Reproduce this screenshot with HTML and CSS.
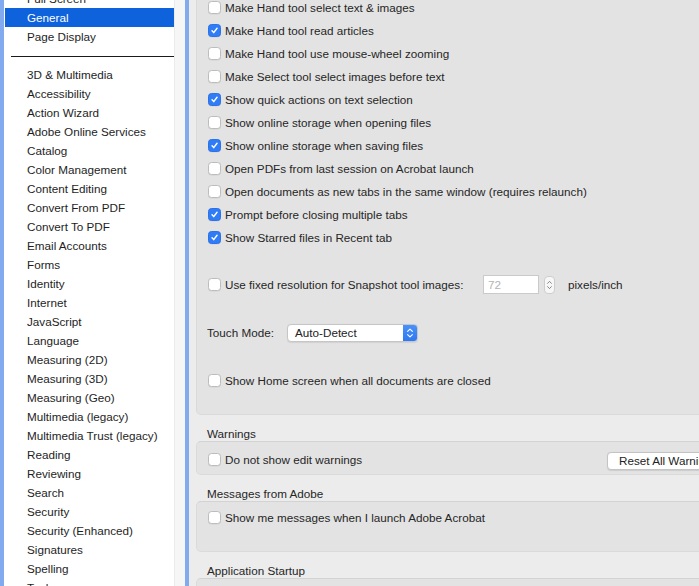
FILE: index.html
```html
<!DOCTYPE html>
<html>
<head>
<meta charset="utf-8">
<link rel="stylesheet" href="styles.css">
</head>
<body>
<div class="window">
  <div class="sidebar">
    <ul class="list">
      <li class="item">Full Screen</li>
      <li class="item selected">General</li>
      <li class="item">Page Display</li>
      <li class="sep"></li>
      <li class="item">3D &amp; Multimedia</li>
      <li class="item">Accessibility</li>
      <li class="item">Action Wizard</li>
      <li class="item">Adobe Online Services</li>
      <li class="item">Catalog</li>
      <li class="item">Color Management</li>
      <li class="item">Content Editing</li>
      <li class="item">Convert From PDF</li>
      <li class="item">Convert To PDF</li>
      <li class="item">Email Accounts</li>
      <li class="item">Forms</li>
      <li class="item">Identity</li>
      <li class="item">Internet</li>
      <li class="item">JavaScript</li>
      <li class="item">Language</li>
      <li class="item">Measuring (2D)</li>
      <li class="item">Measuring (3D)</li>
      <li class="item">Measuring (Geo)</li>
      <li class="item">Multimedia (legacy)</li>
      <li class="item">Multimedia Trust (legacy)</li>
      <li class="item">Reading</li>
      <li class="item">Reviewing</li>
      <li class="item">Search</li>
      <li class="item">Security</li>
      <li class="item">Security (Enhanced)</li>
      <li class="item">Signatures</li>
      <li class="item">Spelling</li>
      <li class="item">Tools</li>
    </ul>
    <div class="track"></div>
  </div>

  <div class="main">
    <section class="box box-first">
      <div class="row"><span class="cb"></span><span>Make Hand tool select text &amp; images</span></div>
      <div class="row"><span class="cb on"><svg viewBox="0 0 13 13"><path d="M3.6 6.9 L5.6 9 L9.5 3.9"/></svg></span><span>Make Hand tool read articles</span></div>
      <div class="row"><span class="cb"></span><span>Make Hand tool use mouse-wheel zooming</span></div>
      <div class="row"><span class="cb"></span><span>Make Select tool select images before text</span></div>
      <div class="row"><span class="cb on"><svg viewBox="0 0 13 13"><path d="M3.6 6.9 L5.6 9 L9.5 3.9"/></svg></span><span>Show quick actions on text selection</span></div>
      <div class="row"><span class="cb"></span><span>Show online storage when opening files</span></div>
      <div class="row"><span class="cb on"><svg viewBox="0 0 13 13"><path d="M3.6 6.9 L5.6 9 L9.5 3.9"/></svg></span><span>Show online storage when saving files</span></div>
      <div class="row"><span class="cb"></span><span>Open PDFs from last session on Acrobat launch</span></div>
      <div class="row"><span class="cb"></span><span>Open documents as new tabs in the same window (requires relaunch)</span></div>
      <div class="row"><span class="cb on"><svg viewBox="0 0 13 13"><path d="M3.6 6.9 L5.6 9 L9.5 3.9"/></svg></span><span>Prompt before closing multiple tabs</span></div>
      <div class="row"><span class="cb on"><svg viewBox="0 0 13 13"><path d="M3.6 6.9 L5.6 9 L9.5 3.9"/></svg></span><span>Show Starred files in Recent tab</span></div>

      <div class="row row-snap">
        <span class="cb"></span><span class="snap-label">Use fixed resolution for Snapshot tool images:</span>
        <span class="field">72</span>
        <span class="stepper"><svg viewBox="0 0 11 18"><path d="M3.2 7 L5.5 4.6 L7.8 7"/><path d="M3.2 11 L5.5 13.4 L7.8 11"/></svg></span>
        <span class="unit">pixels/inch</span>
      </div>

      <div class="row row-touch">
        <span class="touch-label">Touch Mode:</span>
        <span class="select"><span class="select-text">Auto-Detect</span><span class="select-arrows"><svg viewBox="0 0 14 18"><path d="M4.3 7.3 L7 4.7 L9.7 7.3"/><path d="M4.3 10.7 L7 13.3 L9.7 10.7"/></svg></span></span>
      </div>

      <div class="row row-home"><span class="cb"></span><span>Show Home screen when all documents are closed</span></div>
    </section>

    <div class="heading">Warnings</div>
    <section class="box box-warn">
      <div class="row"><span class="cb"></span><span class="warn-label">Do not show edit warnings</span><span class="btn">Reset All Warnings</span></div>
    </section>

    <div class="heading">Messages from Adobe</div>
    <section class="box box-msg">
      <div class="row"><span class="cb"></span><span>Show me messages when I launch Adobe Acrobat</span></div>
    </section>

    <div class="heading">Application Startup</div>
    <section class="box box-start"></section>
  </div>
</div>
</body>
</html>
```

FILE: styles.css
```css
html, body {
  margin: 0;
  padding: 0;
}

body {
  width: 699px;
  height: 586px;
  overflow: hidden;
  background: #ececec;
  font-family: "Liberation Sans", Arial, sans-serif;
  font-size: 11.7px;
  color: #262626;
}

.window {
  display: flex;
  height: 586px;
  overflow: hidden;
}

/* ---------- sidebar ---------- */
.sidebar {
  flex: none;
  display: flex;
  width: 181px;
  height: 586px;
  border-left: 4px solid #82aaef;
  border-right: 4px solid #82aaef;
  background: #ffffff;
  overflow: hidden;
}

.list {
  list-style: none;
  margin: -11px 0 0 0;
  padding: 0;
  width: 170px;
  flex: none;
}

.item {
  height: 19px;
  line-height: 19px;
  padding-left: 23px;
  white-space: nowrap;
  color: #1e1e1e;
}

.item.selected {
  margin-left: 1px;
  padding-left: 22px;
  background: #0e63dc;
  color: #ffffff;
}

.sep {
  height: 10px;
  margin: 0 0 8px 7px;
  border-bottom: 1px solid #1a1a1a;
}

.track {
  flex: none;
  width: 10px;
  background: #f6f6f6;
  border-left: 1px solid #ebebeb;
}

/* ---------- main ---------- */
.main {
  flex: none;
  width: 546px;
  padding-left: 7px;
}

.box {
  background: #e3e3e3;
  border: 1px solid #dadada;
  border-top-color: #d3d3d3;
  border-radius: 5px;
  padding-left: 11px;
  padding-right: 10px;
}

.box-first {
  margin-top: -13px;
  padding-top: 8px;
  padding-bottom: 22px;
}

.box-warn {
  padding-top: 6px;
  padding-bottom: 3px;
}

.box-msg {
  padding-top: 4px;
  padding-bottom: 22px;
}

.box-start {
  height: 40px;
}

.heading {
  height: 14px;
  line-height: 14px;
  padding: 12px 0 0 11px;
  color: #262626;
}

.row {
  display: flex;
  align-items: center;
  height: 23px;
  white-space: nowrap;
}

.row-snap {
  margin-top: 24px;
}

.row-touch {
  margin-top: 25px;
}

.row-home {
  margin-top: 25px;
}

/* ---------- controls ---------- */
.cb {
  flex: none;
  box-sizing: border-box;
  width: 13px;
  height: 13px;
  margin-right: 4px;
  border: 1px solid #bcbcbc;
  border-radius: 3.5px;
  background: #ffffff;
  box-shadow: 0 0.5px 0.5px rgba(0, 0, 0, 0.08);
  display: flex;
}

.cb.on {
  background: #2f7cf6;
  border-color: #2a72e8;
}

.cb svg {
  width: 11px;
  height: 11px;
  fill: none;
  stroke: #ffffff;
  stroke-width: 1.7;
  stroke-linecap: round;
  stroke-linejoin: round;
}

.snap-label {
  width: 258px;
  flex: none;
}

.field {
  flex: none;
  box-sizing: border-box;
  width: 56px;
  height: 19px;
  line-height: 17px;
  padding-left: 4px;
  background: #ffffff;
  border: 1px solid #cacaca;
  color: #b4b4b4;
}

.stepper {
  flex: none;
  box-sizing: border-box;
  width: 11px;
  height: 18px;
  margin-left: 5px;
  border: 1px solid #cdcdcd;
  border-radius: 4px;
  background: #f7f7f7;
  display: flex;
}

.stepper svg {
  width: 9px;
  height: 16px;
  fill: none;
  stroke: #707070;
  stroke-width: 1;
  stroke-linecap: round;
  stroke-linejoin: round;
}

.unit {
  margin-left: 13px;
}

.touch-label {
  flex: none;
  width: 80px;
  margin-left: -1px;
}

.select {
  flex: none;
  display: flex;
  box-sizing: border-box;
  width: 131px;
  height: 18px;
  border: 1px solid #c6c6c6;
  border-radius: 4px;
  background: #ffffff;
  overflow: hidden;
  box-shadow: 0 0.5px 1px rgba(0, 0, 0, 0.08);
}

.select-text {
  flex: 1;
  line-height: 16px;
  padding-left: 7px;
  color: #222222;
}

.select-arrows {
  flex: none;
  width: 14px;
  background: linear-gradient(#4a92f8, #2e78f1);
  display: flex;
}

.select-arrows svg {
  width: 14px;
  height: 16px;
  fill: none;
  stroke: #ffffff;
  stroke-width: 1.2;
  stroke-linecap: round;
  stroke-linejoin: round;
}

.warn-label {
  flex: 1;
}

.btn {
  flex: none;
  box-sizing: border-box;
  width: 124px;
  height: 18px;
  line-height: 16px;
  padding-left: 11px;
  background: #ffffff;
  border: 1px solid #c4c4c4;
  border-radius: 4px;
  box-shadow: 0 0.5px 1px rgba(0, 0, 0, 0.1);
  color: #222222;
  margin-top: 2px;
}
```
